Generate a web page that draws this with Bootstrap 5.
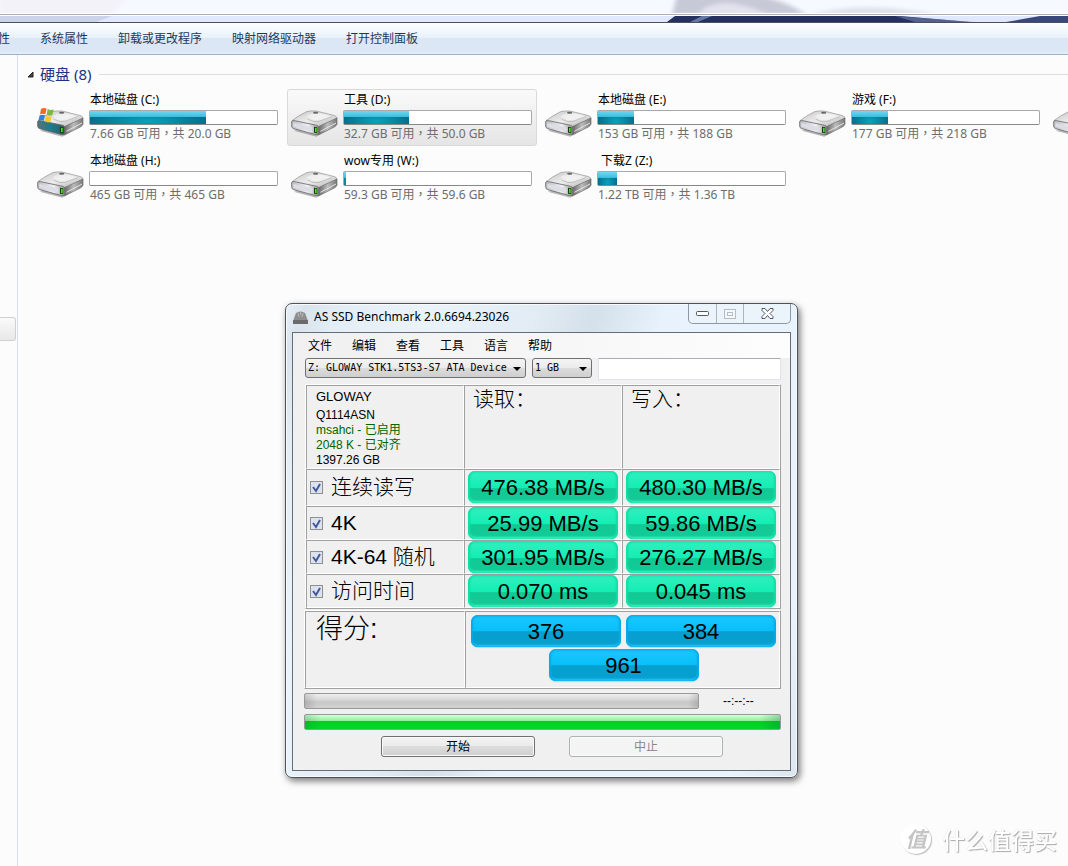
<!DOCTYPE html>
<html lang="zh-CN">
<head>
<meta charset="utf-8">
<meta name="viewport" content="width=device-width, initial-scale=1">
<title>AS SSD Benchmark</title>
<link href="https://cdn.jsdelivr.net/npm/bootstrap@5.3.0/dist/css/bootstrap.min.css" rel="stylesheet">
<style>
body{font:12px/16px "Noto Sans","Noto Sans CJK SC",sans-serif;background:#fcfcfc;color:#000;overflow:hidden}
.glass{height:23px;background:#f6f9ff;border-bottom:1px solid #4b4e5c}
.glass svg{display:block;width:100%;height:22px}
.cmdbar{height:32px;gap:30px;margin-left:-2px;color:#1e395b;background:linear-gradient(#fff,#e7f1fa 48%,#dce6f4 50%,#dce7f5 90%,#e4effb);border-bottom:1px solid #9fb0c9;white-space:nowrap}
.cmdbar a{color:inherit;text-decoration:none}
.sidepane{width:18px;border-right:1px solid #d6e1ee;flex:none;padding-top:262px}
.sidebox{display:block;width:16px;height:24px;border:1px solid #d0d0d0;border-left:0;border-radius:0 3px 3px 0;background:linear-gradient(#fafafa,#e8e8e8)}
.group{padding:9px 0 5px 7px}
.group-title{font-size:15px;line-height:20px;color:#1e3287;font-weight:400}
.group-line{height:1px;background:#dedede}
.drives{display:grid;grid-template-columns:repeat(5,250px);gap:4px;padding-left:15px}
.drive{height:57px;padding:2px 3px;border:1px solid transparent;border-radius:3px}
.drive.active{border-color:#d9d9d9;background:linear-gradient(#fafafa,#e5e5e5)}
.drive-icon{width:48px;height:32px;margin-top:14px;flex:none}
.drive-info{width:189px;margin-left:4px;white-space:pre}
.drive-name,.free{padding-left:1px}
.cap{height:15px;border:1px solid #a9a9a9;border-bottom-color:#888;border-radius:2px;background:#fff;margin:2px 0 1px}
.cap-fill{height:13px;background:linear-gradient(#70d8f0,#38bbdc 48%,transparent 50%),radial-gradient(ellipse at 50% 80%,#0aa3bd,#045a78)}
.free{color:#6d6d6d;font-family:"Noto Sans","Noto Sans CJK TC",sans-serif}
.win{position:absolute;left:285px;top:303px;width:513px;border:1px solid #4c535c;border-radius:7px;padding:0 6px 6px;background:linear-gradient(110deg,#e8f0f7 0,#d8e3ed 3%,#e3edf5 8%,#ebf3fa 20%,#e2ecf4 37%,#d4e0ea 46%,#e7f2fc 56%,#e9f3fc 90%,#dce6ef);box-shadow:inset 0 0 0 1px #f7fbff,2px 3px 7px #0008}
.titlebar{height:28px}
.app-icon{margin-top:5px}
.app-name{line-height:26px;padding-left:5px}
.ctl{display:flex;height:20px;border:1px solid #8d99a6;border-top:0;border-radius:0 0 5px 5px;overflow:hidden;background:#ebf3fb}
.ctl button{border:0;border-right:1px solid #aab5c0;background:none;padding:0;width:28px;display:flex;justify-content:center;align-items:center}
.ctl button:nth-child(2){width:27px}
.ctl button:last-child{width:46px;border:0}
.client{border:1px solid #666d76;background:#f0f0f0;padding-bottom:13px}
.menus{height:25px;gap:20px;padding-left:15px;background:linear-gradient(90deg,#f0f0f0,#fdfdfd)}
.menus a{color:#000;text-decoration:none}
.inner{padding:0 9px 0 12px}
.pickers{gap:6px}
.combo{height:20px;border:1px solid #707070;border-radius:3px;padding:0 2px;appearance:none;color:#000;font:10px/18px "DejaVu Sans Mono","Liberation Mono",monospace;background:url("data:image/svg+xml,%3Csvg xmlns='http://www.w3.org/2000/svg' width='8' height='5'%3E%3Cpath d='M0 0h8L4 4z'/%3E%3C/svg%3E") no-repeat right 4px top 8px,linear-gradient(#f4f4f4,#ebebeb 48%,#dcdcdc 50%,#cfcfcf)}
.combo-dev{width:221px}.combo-size{width:60px}
.note{height:22px;border:1px solid #e2e3ea;border-top-color:#abadb3;border-radius:1px;background:#fff}
.results{border:1px solid #a0a0a0;border-top-color:#fff;border-left-color:#fff;border-collapse:separate;border-spacing:0;width:100%;table-layout:fixed;font:21px/26px "Liberation Sans","Noto Sans CJK SC",sans-serif;margin-top:4px}
.results th,.results td,.box{border:1px solid #fff;border-top-color:#a0a0a0;border-left-color:#a0a0a0;font-weight:300}
.results th,.results td{padding:0 3px;height:34px;vertical-align:top}
.results thead th{height:84px;padding:0 8px}
.results thead th:first-child{padding-left:9px}
.results .tall th,.results .tall td{height:37px;padding-top:1px}
.results label{display:flex;align-items:center;height:32px}
.maker{font:13px/22px "Liberation Sans",sans-serif}
.info{font:12px/15px "Liberation Sans","Noto Sans CJK SC",sans-serif}
.ok{color:#006400}
.tick{appearance:none;width:13px;height:13px;border:1px solid #8e8f8f;margin:0 8px 0 0;background:#dde3ee}
.tick:checked{background:url("data:image/svg+xml,%3Csvg xmlns='http://www.w3.org/2000/svg' width='11' height='11'%3E%3Cpath d='M2 5l3 4L9 2' fill='none' stroke='%23415a9b' stroke-width='2'/%3E%3C/svg%3E") #dde3ee}
.pill{width:150px;height:32px;border-radius:7px;font:22px/34px "Liberation Sans",sans-serif;text-align:center;color:#000}
.pill-g{background:linear-gradient(#23e8b2,#2befbd 12%,#12eeb3 53%,#12c994 55%,#11cb96);box-shadow:inset 2px 0 2px #0edfa5,inset -2px 0 2px #0edfa5,inset 0 -2px 2px #40f5c4,0 1px 1px #90f5d8}
.pill-b{background:linear-gradient(#0fb3ee,#17c6fd 12%,#08bff9 50%,#069fce 52%,#06a1d1);box-shadow:inset 2px 0 2px #08a9e6,inset -2px 0 2px #08a9e6,inset 0 -2px 2px #2cc8ff,0 1px 1px #93e4ff}
.score{height:79px;margin:1px 0 0 -1px;border:1px solid #a0a0a0;border-top-color:#fff;border-left-color:#fff}
.score-name{flex:none;width:160px;padding-left:10px;font:300 27px/34px "Liberation Sans","Noto Sans CJK SC",sans-serif}
.score-vals{gap:2px 5px;padding:3px 0 0 2px}
.bars{margin-left:-1px}
.bar{height:16px;border:1px solid #999;border-radius:2px}
.bar-idle{width:395px;background:linear-gradient(90deg,#0002,transparent 12px calc(100% - 10px),#0002),linear-gradient(#eee,#dcdcdc 35%,#c8c8c8 60%,#d2d2d2)}
.bar-run{margin-top:5px;background:linear-gradient(90deg,#0643,transparent 16px calc(100% - 20px),#0644),linear-gradient(#d6ffd8,#8ff096 42%,#05ce22 45%,#05d728)}
.acts{gap:34px;margin:6px 0 0 18px}
.act{width:154px;height:21px;border:1px solid #707070;border-radius:3px;padding:0;color:#000;line-height:16px;background:linear-gradient(#f3f3f3,#ebebeb 48%,#dcdcdc 50%,#cfcfcf);box-shadow:inset 0 0 0 1px #fafafa}
.act:disabled{border-color:#adb2b5;background:#f4f4f4;color:#888}
.stamp{position:fixed;right:11px;bottom:10px;color:#fff;font:500 23px/34px "Noto Sans CJK SC",sans-serif;text-shadow:1px 1px 1px #aaa,0 0 1px #ccc}
.stamp-logo{width:30px;height:30px;border-radius:50%;background:#fff;box-shadow:1px 1px 1px #bbb;color:#c4c4c4;font-size:21px;line-height:28px;text-align:center;text-shadow:none;font-weight:700;font-style:italic;margin-right:11px}
</style>
</head>
<body class="min-vh-100 d-flex flex-column">
<svg width="0" height="0" class="position-absolute" aria-hidden="true">
<defs>
<linearGradient id="top" x1="0" y1="0" x2="1" y2="1"><stop offset="0" stop-color="#c6c6c6"/><stop offset=".5" stop-color="#ececec"/><stop offset="1" stop-color="#aaa"/></linearGradient>
<linearGradient id="side" x1="0" y1="0" x2="1" y2="0"><stop offset="0" stop-color="#666"/><stop offset=".5" stop-color="#bdbdbd"/><stop offset="1" stop-color="#777"/></linearGradient>
<linearGradient id="front"><stop offset="0" stop-color="#b9b9c0"/><stop offset=".6" stop-color="#f0f0f5"/><stop offset="1" stop-color="#999"/></linearGradient>
<linearGradient id="teal"><stop offset="0" stop-color="#56727d"/><stop offset=".5" stop-color="#197d8c"/><stop offset="1" stop-color="#3b5660"/></linearGradient>
<filter id="soft" x="-10%" y="-30%" width="120%" height="160%"><feGaussianBlur stdDeviation="2"/></filter>
<symbol id="body" viewBox="0 0 144 96">
<path d="M8 74l68 18 64-38-8-10z" fill="#888" opacity=".6" filter="url(#soft)"/>
<path d="M3 44Q20 30 47 17q8-3 28-2l56 14q8 3 7 9L80 64z" fill="url(#top)" stroke="#8c8c8c" stroke-width="2"/>
<path d="M46 32q12-12 42-9l32 8q-22 17-46 12z" fill="#f6f6f6" opacity=".6"/>
<path d="M50 40q20 10 34 6l38-14" fill="none" stroke="#aaa" stroke-width="2"/>
<ellipse cx="74" cy="20" rx="8" ry="3" fill="#666"/>
<path d="M82 62l56-26v18q-2 6-8 9L82 87z" fill="url(#side)" stroke="#707070" stroke-width="2"/>
<path d="M88 76l47-25" stroke="#e5e5e5" stroke-width="3"/>
</symbol>
<symbol id="drive" viewBox="0 0 144 96">
<use href="#body" width="144" height="96"/>
<path d="M2 46q3-3 9-2l66 14q6 1 6 7v15q0 8-8 6L8 68q-6-2-6-8z" fill="url(#front)" stroke="#6a6a6a" stroke-width="2.500"/>
<path d="M7 51l57 13v14L7 62z" fill="#dddde6"/><path d="M69 62l10 2v18l-10-2z" fill="#143c14"/><path d="M72 65l5 1v13l-5-1z" fill="#4be01f"/>
</symbol>
<symbol id="sysdrive" viewBox="0 0 144 96">
<use href="#body" width="144" height="96"/>
<path d="M2 46q3-3 9-2l66 14q6 1 6 7v15q0 8-8 6L8 68q-6-2-6-8z" fill="url(#teal)" stroke="#666" stroke-width="2.500"/>
<path d="M69 62l10 2v18l-10-2z" fill="#143c14"/><path d="M72 65l5 1v13l-5-1z" fill="#4be01f"/>
<path d="M12 9q9-5 17-1l-4 17q-9-4-16 0z" fill="#ec6a2c"/><path d="M32 9q8 5 18 1l-4 17q-9 4-17-1z" fill="#79b93f"/>
<path d="M8 28q8-4 16 0l-4 17q-8-5-16-1z" fill="#2f86d8"/><path d="M27 29q9 5 17 1l-4 17q-9 4-17-1z" fill="#fbc72c"/>
</symbol>
</defs></svg>

<header>
<div class="glass"><svg viewBox="0 0 1068 22" preserveAspectRatio="none" aria-hidden="true">
<g filter="url(#soft)"><path d="M0-5h130L95 30H0z" fill="#f2f2f8"/><path d="M677-5h75q30 3 55 20H672z" fill="#c8c9d7"/><path d="M697 14q18-18 55-6l17 7z" fill="#e2e3ed"/><path d="M810 15q50-15 130 0z" fill="#dddfe9"/></g>
<path d="M0 16h1068v6H0z" fill="#dfe8fc"/><path d="M0 16h112l-16 6H0z" fill="#cbd3ea"/>
<path d="M675 16h225l70 6H667z" fill="#25305e"/><path d="M895 16l80 6h-60z" fill="#7481ad" opacity=".6"/><path d="M1040 16h28v6h-62z" fill="#28356b" opacity=".9"/>
<path d="M690 22l12-6h10l-14 6z" fill="#6678a5"/>
<path d="M0 13.500h1068M0 15.500h1068" stroke="#fff"/><path d="M0 14.500h1068" stroke="#aaabb8"/></svg></div>
<nav class="cmdbar d-flex align-items-center"><a href="#">性</a><a href="#">系统属性</a><a href="#">卸载或更改程序</a><a href="#">映射网络驱动器</a><a href="#">打开控制面板</a></nav>
</header>

<main class="d-flex flex-grow-1 overflow-hidden">
<aside class="sidepane"><span class="sidebox"></span></aside>
<section class="flex-grow-1 overflow-hidden">
<div class="group d-flex align-items-center"><svg width="15" height="8" aria-hidden="true"><path d="M3 7h5V2z" fill="#444" stroke="#222"/></svg><h1 class="group-title m-0 me-2">硬盘 (8)</h1><div class="group-line flex-grow-1"></div></div>
<div class="drives" id="drives"></div>
</section>
</main>

<section class="win" aria-label="AS SSD Benchmark">
<div class="titlebar d-flex">
<svg width="17" height="17" viewBox="0 0 17 17" class="app-icon" aria-hidden="true"><path d="M4 4q4.500-3 9 0l3 8H1z" fill="#8e8e8e"/><path d="M1 11h15v4H1z" fill="#6a6a6a"/><path d="M6 4l1 4M8.500 3v3M11 4l-1 4" stroke="#bbb"/></svg>
<span class="app-name flex-grow-1">AS SSD Benchmark 2.0.6694.23026</span>
<div class="ctl">
<button aria-label="最小化"><svg width="13" height="6"><rect x=".5" y=".5" width="12" height="4" rx="1" fill="#fff" stroke="#505766"/></svg></button>
<button aria-label="最大化" disabled><svg width="12" height="10"><rect x=".5" y=".5" width="11" height="9" fill="#f6f9fc" stroke="#b4bcc6"/><rect x="3.500" y="3.500" width="5" height="3" fill="none" stroke="#b4bcc6"/></svg></button>
<button aria-label="关闭"><svg width="13" height="11"><path d="M1 .5h3l2.500 3 2.500-3h3v2L9 5.500l3 3v2H9l-2.500-3-2.500 3H1v-2l3-3-3-3z" fill="#fff" stroke="#505766"/></svg></button>
</div></div>
<div class="client">
<nav class="menus d-flex align-items-center"><a href="#">文件</a><a href="#">编辑</a><a href="#">查看</a><a href="#">工具</a><a href="#">语言</a><a href="#">帮助</a></nav>
<div class="inner">
<div class="pickers d-flex align-items-start">
<select class="combo combo-dev" aria-label="设备"><option>Z: GLOWAY STK1.5TS3-S7 ATA Device</option></select>
<select class="combo combo-size" aria-label="大小"><option>1 GB</option></select>
<input class="note flex-grow-1" type="text" aria-label="备注">
</div>
<table class="results">
<thead><tr><th><div class="maker">GLOWAY</div><div class="info">Q1114ASN<br><span class="ok">msahci - 已启用<br>2048 K - 已对齐</span><br>1397.26 GB</div></th><th scope="col">读取：</th><th scope="col">写入：</th></tr></thead>
<tbody>
<tr class="tall"><th scope="row"><label><input class="tick" type="checkbox" checked>连续读写</label></th><td><div class="pill pill-g">476.38 MB/s</div></td><td><div class="pill pill-g">480.30 MB/s</div></td></tr>
<tr><th scope="row"><label><input class="tick" type="checkbox" checked>4K</label></th><td><div class="pill pill-g">25.99 MB/s</div></td><td><div class="pill pill-g">59.86 MB/s</div></td></tr>
<tr><th scope="row"><label><input class="tick" type="checkbox" checked>4K-64 随机</label></th><td><div class="pill pill-g">301.95 MB/s</div></td><td><div class="pill pill-g">276.27 MB/s</div></td></tr>
<tr><th scope="row"><label><input class="tick" type="checkbox" checked>访问时间</label></th><td><div class="pill pill-g">0.070 ms</div></td><td><div class="pill pill-g">0.045 ms</div></td></tr>
</tbody></table>
<div class="score d-flex"><div class="box score-name">得分:</div><div class="box score-vals flex-grow-1 d-flex flex-wrap justify-content-center align-content-start"><div class="pill pill-b">376</div><div class="pill pill-b">384</div><div class="pill pill-b">961</div></div></div>
<div class="bars">
<div class="d-flex align-items-center mt-1"><div class="bar bar-idle"></div><span class="ms-4 info">--:--:--</span></div>
<div class="bar bar-run"></div></div>
<div class="acts d-flex justify-content-center"><button class="act">开始</button><button class="act" disabled>中止</button></div>
</div></div>
</section>
<div class="stamp d-flex align-items-center"><span class="stamp-logo">值</span>什么值得买</div>
<script>
const drives=[["本地磁盘 (C:)","7.66 GB 可用，共 20.0 GB",62],["工具 (D:)","32.7 GB 可用，共 50.0 GB",35,1],["本地磁盘 (E:)","153 GB 可用，共 188 GB",19],["游戏 (F:)","177 GB 可用，共 218 GB",19],["","",0],["本地磁盘 (H:)","465 GB 可用，共 465 GB",0],["wow专用 (W:)","59.3 GB 可用，共 59.6 GB",1],[" 下载Z (Z:)","1.22 TB 可用，共 1.36 TB",10]];
document.getElementById("drives").innerHTML=drives.map(([n,f,p,a],i)=>`<div class="drive d-flex ${a?"active":""}"><svg class="drive-icon" aria-hidden="true"><use href="#${i?"drive":"sysdrive"}"/></svg><div class="drive-info"><div class="drive-name">${n}</div><div class="cap"><div class="cap-fill" style="width:${p}%"></div></div><div class="free" lang="zh-TW">${f}</div></div></div>`).join("");
</script>
<script src="https://cdn.jsdelivr.net/npm/bootstrap@5.3.0/dist/js/bootstrap.bundle.min.js"></script>
</body>
</html>
